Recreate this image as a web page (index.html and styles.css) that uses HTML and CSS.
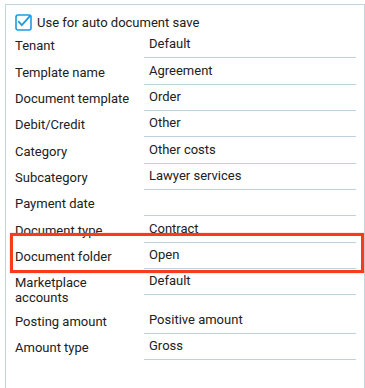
FILE: index.html
```html
<!DOCTYPE html>
<html>
<head>
<meta charset="utf-8">
<link rel="stylesheet" href="styles.css">
</head>
<body>
<div class="panel">
  <label class="check-row">
    <svg class="check" width="17" height="17" viewBox="0 0 17 17">
      <rect x="1" y="1" width="15" height="15" rx="2" fill="none" stroke="#1e9be0" stroke-width="1.6"/>
      <path d="M3.3 7.2 L6.8 11.2 L15.6 1.4" fill="none" stroke="#1e9be0" stroke-width="1.8"/>
    </svg>
    <span>Use for auto document save</span>
  </label>
  <div class="rows">
    <div class="row"><div class="lbl">Tenant</div><div class="val">Default</div></div>
    <div class="row"><div class="lbl">Template name</div><div class="val">Agreement</div></div>
    <div class="row"><div class="lbl">Document template</div><div class="val">Order</div></div>
    <div class="row"><div class="lbl">Debit/Credit</div><div class="val">Other</div></div>
    <div class="row"><div class="lbl">Category</div><div class="val">Other costs</div></div>
    <div class="row"><div class="lbl">Subcategory</div><div class="val">Lawyer services</div></div>
    <div class="row"><div class="lbl">Payment date</div><div class="val"></div></div>
    <div class="row"><div class="lbl">Document type</div><div class="val">Contract</div></div>
    <div class="row highlighted"><div class="lbl">Document folder</div><div class="val">Open</div><div class="mark"></div></div>
    <div class="row"><div class="lbl">Marketplace accounts</div><div class="val">Default</div></div>
    <div class="row"><div class="lbl">Posting amount</div><div class="val">Positive amount</div></div>
    <div class="row"><div class="lbl">Amount type</div><div class="val">Gross</div></div>
  </div>
</div>
</body>
</html>
```

FILE: styles.css
```css
html, body {
  margin: 0;
  padding: 0;
  background: #ffffff;
  overflow: hidden;
}
body {
  font-family: Roboto, "Liberation Sans", sans-serif;
  font-size: 13px;
  color: #212121;
  height: 388px;
}
.panel {
  margin: 4px 0 0 5px;
  width: 360px;
  box-sizing: border-box;
  height: 400px;
  border: 1px solid #c4d6e0;
  border-bottom: none;
  padding: 8px 8px 0 9px;
}
.check-row {
  display: flex;
  align-items: center;
  height: 19px;
  gap: 5px;
}
.check {
  display: block;
  margin-top: -1px;
}
.rows {
  display: flex;
  flex-direction: column;
}
.row {
  display: flex;
  position: relative;
  align-items: flex-start;
}
.lbl {
  width: 122px;
  flex: none;
  padding-top: 6.4px;
  padding-bottom: 2px;
  line-height: 15px;
}
.val {
  margin-left: 7px;
  flex: 1;
  border-bottom: 1px solid #bcd2dd;
  padding: 4.4px 0 0 5px;
  line-height: 15px;
  box-sizing: border-box;
  height: 26.33px;
}
.mark {
  position: absolute;
  left: -5px;
  right: -8px;
  top: -9.3px;
  bottom: -4.3px;
  border: 3px solid #fa3b1b;
  box-shadow: 0 0 1px rgba(250, 59, 27, 0.6);
  pointer-events: none;
}
```
